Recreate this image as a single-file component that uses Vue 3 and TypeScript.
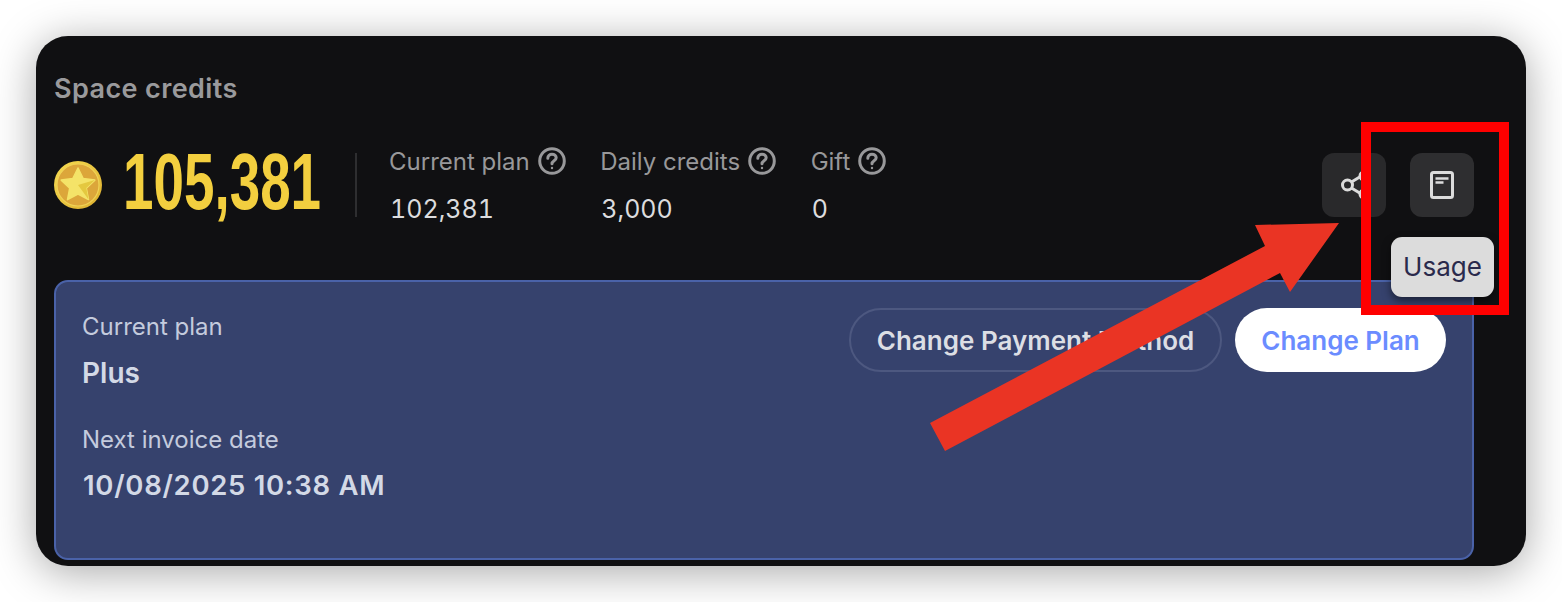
<script setup lang="ts">
const stats = [
  { label: 'Current plan', value: '102,381' },
  { label: 'Daily credits', value: '3,000' },
  { label: 'Gift', value: '0' },
]
</script>

<template>
  <div class="page">
    <div class="card">
      <h2 class="title">Space credits</h2>

      <div class="summary">
        <svg class="coin" viewBox="0 0 48 48">
          <defs>
            <linearGradient id="rim" x1="0" y1="0" x2="1" y2="1">
              <stop offset="0" stop-color="#f6dc52" />
              <stop offset="1" stop-color="#dcae2e" />
            </linearGradient>
          </defs>
          <circle cx="24" cy="24" r="24" fill="url(#rim)" />
          <circle cx="24" cy="24" r="21" fill="#dca63a" stroke="#f0d256" stroke-width="1.2" />
          <path d="M24 7l5.2 10.6 11.6 1.5-8.5 8 2.2 11.5L24 33l-10.5 5.6 2.2-11.5-8.5-8 11.6-1.5z" fill="#f4e368" stroke="#f4e368" stroke-width="1.5" stroke-linejoin="round" />
          <path d="M24 7v17l10.5 14.6-2.2-11.5 8.500-8L24 24z" fill="#e4c83f" />
        </svg>
        <div class="total"><span>105,381</span></div>
        <div class="divider"></div>

        <div class="stats">
          <div v-for="s in stats" :key="s.label" class="stat">
            <div class="stat-label">
              {{ s.label }}
              <svg class="help" viewBox="0 0 28 28" fill="none" stroke="currentColor" stroke-width="3">
                <circle cx="14" cy="14" r="12.3" />
                <path d="M9.8 11.2c0-2.5 1.9-4 4.2-4s4.2 1.5 4.2 3.6c0 3-4.2 3-4.2 6" stroke-linecap="round" />
                <circle cx="14" cy="21" r="1.2" fill="currentColor" stroke="none" />
              </svg>
            </div>
            <div class="stat-value">{{ s.value }}</div>
          </div>
        </div>

        <div class="actions">
          <button class="icon-btn">
            <svg width="32" height="32" viewBox="0 0 32 32" fill="none" stroke="#dcdcdc" stroke-width="3">
              <circle cx="9.5" cy="16" r="5" />
              <circle cx="26" cy="7" r="4" />
              <circle cx="26" cy="25" r="4" />
              <path d="M13.5 13l9-5.500M13.5 19l9 5.500" />
            </svg>
          </button>
          <div class="usage">
            <button class="icon-btn light">
              <svg width="32" height="32" viewBox="0 0 32 32" fill="none" stroke="#dcdcdc">
                <rect x="5.5" y="3.5" width="21" height="25" rx="2" stroke-width="3" />
                <path d="M9.5 9.5h13M9.5 13.500h8" stroke-width="2.4" />
              </svg>
            </button>
            <div class="tooltip">Usage</div>
          </div>
        </div>
      </div>

      <section class="plan">
        <div class="plan-info">
          <div class="plan-label">Current plan</div>
          <div class="plan-value">Plus</div>
          <div class="plan-label next">Next invoice date</div>
          <div class="plan-value date">10/08/2025 10:38 AM</div>
        </div>
        <div class="plan-buttons">
          <button class="pill ghost">Change Payment Method</button>
          <button class="pill solid">Change Plan</button>
        </div>
      </section>
    </div>

    <!-- annotation drawn on top of the screenshot -->
    <svg class="markup" viewBox="0 0 1562 602">
      <path d="M930 423L1265 246L1255 225L1339 223L1290 292L1280 273L945 451Z" fill="#ea3424" />
      <rect x="1366" y="127" width="138" height="183" fill="none" stroke="#ff0000" stroke-width="10" />
    </svg>
  </div>
</template>

<style scoped>
.page {
  position: relative;
  width: 1562px;
  height: 602px;
  padding: 36px;
  box-sizing: border-box;
  background: #fff;
  overflow: hidden;
  font-family: Inter, "Liberation Sans", sans-serif;
}

.card {
  height: 530px;
  box-sizing: border-box;
  padding: 34px 52px 0 18px;
  background: #101012;
  border-radius: 32px;
  box-shadow: 0 6px 44px rgba(0, 0, 0, 0.35);
}

.title {
  margin: 0;
  font-size: 27px;
  line-height: 38px;
  font-weight: 600;
  letter-spacing: 0.4px;
  color: #9a9a9c;
}

.summary {
  display: flex;
  align-items: center;
  height: 64px;
  margin-top: 45px;
}

.coin {
  width: 48px;
  height: 48px;
  flex: none;
}

.total {
  width: 200px;
  margin-left: 21px;
  padding-bottom: 7px;
  flex: none;
  font-family: "Liberation Sans", sans-serif;
  font-size: 80px;
  line-height: 64px;
  font-weight: 700;
  color: #f3cf3f;
}

.total span {
  display: inline-block;
  transform: scaleX(0.685);
  transform-origin: left center;
  white-space: nowrap;
}

.divider {
  width: 2px;
  height: 64px;
  margin: 0 32px;
  background: #2e2e30;
}

.stats {
  display: flex;
  gap: 34.5px;
}

.stat-label {
  display: flex;
  align-items: center;
  gap: 8px;
  height: 28px;
  font-size: 24px;
  color: #98989a;
  white-space: nowrap;
}

.help {
  width: 28px;
  height: 28px;
}

.stat-value {
  margin-top: 20px;
  padding-left: 1px;
  font-size: 25px;
  line-height: 28px;
  font-variant-numeric: tabular-nums;
  color: #dcdcde;
}

.actions {
  display: flex;
  gap: 24px;
  margin-left: auto;
}

.usage {
  position: relative;
}

.icon-btn {
  display: flex;
  align-items: center;
  justify-content: center;
  width: 64px;
  height: 64px;
  padding: 0;
  border: 0;
  border-radius: 12px;
  background: #29292b;
}

.icon-btn.light {
  background: #2e2e30;
}

.tooltip {
  position: absolute;
  top: 84px;
  left: -19px;
  z-index: 1;
  width: 103px;
  height: 60px;
  border-radius: 11px;
  background: #dcdcdc;
  box-shadow: 0 4px 8px rgba(0, 0, 0, 0.5);
  color: #2a2a4c;
  font-size: 26px;
  line-height: 60px;
  text-align: center;
}

.plan {
  display: flex;
  justify-content: space-between;
  height: 280px;
  margin-top: 63px;
  box-sizing: border-box;
  padding: 28px 26px 0 26px;
  background: #36426d;
  border: 2px solid #4a62a8;
  border-radius: 14px;
}

.plan-label {
  font-size: 24px;
  line-height: 34px;
  color: #c4cbdd;
}

.plan-label.next {
  margin-top: 33px;
}

.plan-value {
  margin-top: 12px;
  font-size: 28px;
  line-height: 34px;
  font-weight: 600;
  color: #d3d9e6;
}

.plan-value.date {
  margin-top: 11px;
  padding-left: 1px;
  font-size: 27.5px;
  letter-spacing: 0.7px;
}

.plan-buttons {
  display: flex;
  gap: 13px;
  margin-top: -2px;
}

.pill {
  height: 64px;
  padding: 0;
  border-radius: 32px;
  font-family: inherit;
  font-size: 26px;
  font-weight: 600;
  white-space: nowrap;
}

.ghost {
  width: 373px;
  border: 2px solid #4d5880;
  background: transparent;
  color: #dcdee4;
}

.solid {
  width: 211px;
  border: 0;
  background: #fff;
  color: #6b8cff;
}

.markup {
  position: absolute;
  top: 0;
  left: 0;
  width: 1562px;
  height: 602px;
  z-index: 2;
  pointer-events: none;
}
</style>
